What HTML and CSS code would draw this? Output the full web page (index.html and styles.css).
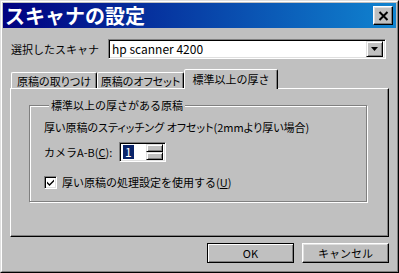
FILE: index.html
```html
<!DOCTYPE html>
<html lang="ja">
<head>
<meta charset="utf-8">
<title>スキャナの設定</title>
<link rel="stylesheet" href="styles.css">
</head>
<body>
<div class="window">
  <div class="frame">
    <div class="titlebar">
      <span class="title">スキャナの設定</span>
      <div class="close">
        <svg width="11" height="10" viewBox="0 0 11 10"><path d="M1.5 1l8 8M9.5 1l-8 8" stroke="#000" stroke-width="2" fill="none"/></svg>
      </div>
    </div>
    <div class="content">
      <div class="scanner-row">
        <span class="scanner-label">選択したスキャナ</span>
        <div class="combo">
          <span class="combo-text">hp scanner 4200</span>
          <div class="combo-btn">
            <svg width="7" height="4" viewBox="0 0 7 4"><path d="M0 0h7L3.5 4z" fill="#000"/></svg>
          </div>
        </div>
      </div>
      <div class="tabs">
        <div class="tab tab-1">原稿の取りつけ</div>
        <div class="tab tab-2">原稿のオフセット</div>
        <div class="tab tab-active">標準以上の厚さ</div>
      </div>
      <div class="panel">
        <fieldset class="group">
          <legend>標準以上の厚さがある原稿</legend>
          <div class="desc">厚い原稿のスティッチング オフセット(2mmより厚い場合)</div>
          <div class="spin-row">
            <span class="spin-label">カメラA-B(<u>C</u>):</span>
            <div class="spin">
              <span class="spin-value">1</span>
              <div class="spin-btns">
                <div class="spin-btn"></div>
                <div class="spin-btn"></div>
              </div>
            </div>
          </div>
          <div class="check-row">
            <span class="checkbox">
              <svg width="9" height="9" viewBox="0 0 9 9"><path d="M1 3.5l2.5 2.5L8 1.5v2L3.5 8 1 5.5z" fill="#000"/></svg>
            </span>
            <span class="check-label">厚い原稿の処理設定を使用する(<u>U</u>)</span>
          </div>
        </fieldset>
      </div>
      <div class="buttons">
        <div class="btn btn-default">OK</div>
        <div class="btn">キャンセル</div>
      </div>
    </div>
  </div>
</div>
</body>
</html>
```

FILE: styles.css
```css
* { box-sizing: border-box; }
html, body { margin: 0; padding: 0; background: #c0c0c0; }
body {
  font-family: "Noto Sans CJK JP", "DejaVu Sans", sans-serif;
  font-size: 11px;
  color: #000;
  white-space: nowrap;
}
.window {
  width: 399px;
  height: 273px;
  border: 1px solid;
  border-color: #dfdfdf #000 #000 #dfdfdf;
  background: #c0c0c0;
}
.frame {
  height: 100%;
  border: 1px solid;
  border-color: #fff #808080 #808080 #fff;
  padding: 1px;
  display: flex;
  flex-direction: column;
}
.titlebar {
  height: 25px;
  flex: none;
  display: flex;
  align-items: center;
  justify-content: space-between;
  background: linear-gradient(to right, #000080, #1084d0);
  padding: 0 3px 0 2px;
}
.title {
  color: #fff;
  font-size: 20px;
  font-weight: 700;
  line-height: 22px;
  letter-spacing: 0;
}
.close {
  width: 20px;
  height: 19px;
  background: #c0c0c0;
  border: 1px solid;
  border-color: #fff #000 #000 #fff;
  box-shadow: inset -1px -1px 0 #808080, inset 1px 1px 0 #dfdfdf;
  display: flex;
  align-items: center;
  justify-content: center;
}
.content {
  flex: 1;
  padding: 11px 7px 0 7px;
  display: flex;
  flex-direction: column;
}
.scanner-row {
  display: flex;
  align-items: center;
  height: 20px;
}
.scanner-label {
  width: 98px;
  padding-left: 1px;
}
.combo {
  width: 278px;
  height: 20px;
  background: #fff;
  border: 1px solid;
  border-color: #808080 #fff #fff #808080;
  box-shadow: inset 1px 1px 0 #000, inset -1px -1px 0 #dfdfdf;
  display: flex;
  align-items: center;
  justify-content: space-between;
  padding: 2px 2px 2px 3px;
}
.combo-text { line-height: 14px; font-size: 12px; }
.combo-btn {
  width: 17px;
  height: 16px;
  background: #c0c0c0;
  border: 1px solid;
  border-color: #dfdfdf #000 #000 #dfdfdf;
  box-shadow: inset 1px 1px 0 #fff, inset -1px -1px 0 #808080;
  display: flex;
  align-items: center;
  justify-content: center;
}
.tabs {
  margin-top: 10px;
  height: 19px;
  display: flex;
  align-items: flex-end;
  padding-left: 1px;
}
.tab {
  height: 16px;
  border: 1px solid;
  border-bottom: none;
  border-color: #fff #000 transparent #fff;
  border-radius: 2px 2px 0 0;
  box-shadow: inset -1px 0 0 #808080;
  display: flex;
  align-items: center;
  justify-content: center;
  line-height: 14px;
  font-feature-settings: "palt";
}
.tab-1 { width: 86px; }
.tab-2 { width: 87px; }
.tab-active {
  width: 94px;
  height: 20px;
  margin-bottom: -1px;
  position: relative;
  z-index: 1;
  background: #c0c0c0;
  padding-bottom: 2px;
  font-feature-settings: normal;
}
.panel {
  height: 149px;
  border: 1px solid;
  border-color: #fff #000 #000 #fff;
  box-shadow: inset -1px -1px 0 #808080;
  padding: 9px 0 0 18px;
}
.group {
  margin: 0;
  width: 338px;
  border: 1px solid #808080;
  box-shadow: inset 1px 1px 0 #fff, 1px 1px 0 #fff;
  padding: 0 0 12px 14px;
}
.group legend {
  margin-left: 5px;
  padding: 0 2px;
  background: #c0c0c0;
  line-height: 14px;
}
.desc {
  margin-top: 8px;
  line-height: 14px;
  font-feature-settings: "palt";
}
.spin-row {
  margin-top: 8px;
  display: flex;
  align-items: center;
}
.spin-label {
  width: 75px;
  line-height: 14px;
}
.spin {
  width: 47px;
  height: 20px;
  background: #fff;
  border: 1px solid;
  border-color: #808080 #fff #fff #808080;
  box-shadow: inset 1px 1px 0 #000, inset -1px -1px 0 #dfdfdf;
  display: flex;
  align-items: center;
  justify-content: space-between;
  padding: 2px;
}
.spin-value {
  background: #0a246a;
  color: #fff;
  line-height: 14px;
  font-size: 12px;
  padding: 0 2px;
  margin-left: 1px;
}
.spin-btns {
  width: 17px;
  height: 16px;
  display: flex;
  flex-direction: column;
}
.spin-btn {
  flex: 1;
  background: #c0c0c0;
  border: 1px solid;
  border-color: #dfdfdf #000 #000 #dfdfdf;
  box-shadow: inset 1px 1px 0 #fff, inset -1px -1px 0 #808080;
}
.check-row {
  margin-top: 13px;
  display: flex;
  align-items: center;
  line-height: 14px;
}
.checkbox {
  width: 13px;
  height: 13px;
  background: #fff;
  border: 1px solid;
  border-color: #808080 #fff #fff #808080;
  box-shadow: inset 1px 1px 0 #000, inset -1px -1px 0 #dfdfdf;
  display: flex;
  align-items: center;
  justify-content: center;
  margin-right: 5px;
}
.buttons {
  margin-top: 6px;
  display: flex;
  justify-content: flex-end;
  gap: 8px;
}
.btn {
  width: 87px;
  height: 20px;
  border: 1px solid;
  border-color: #fff #000 #000 #fff;
  box-shadow: inset -1px -1px 0 #808080, inset 1px 1px 0 #dfdfdf;
  display: flex;
  align-items: center;
  justify-content: center;
  line-height: 14px;
}
.btn-default {
  border-color: #000;
  box-shadow: inset 1px 1px 0 #fff, inset -1px -1px 0 #808080;
}
```
